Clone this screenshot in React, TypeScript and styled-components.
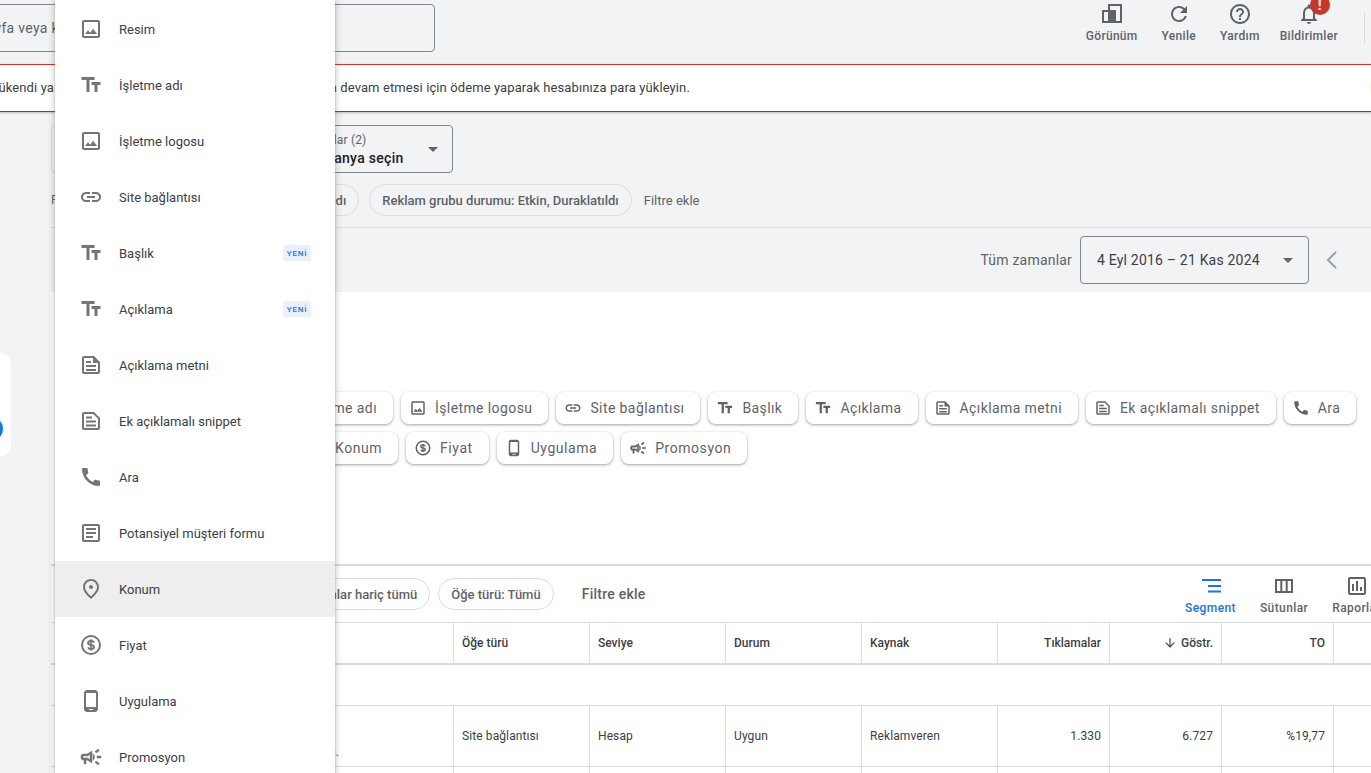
import React from "react";
import styled, { createGlobalStyle } from "styled-components";
import {
  MdOutlineImage, MdTextFields, MdLink, MdCall, MdOutlineArticle,
  MdOutlinePlace, MdOutlinePhoneAndroid, MdOutlineCampaign,
  MdRefresh, MdHelpOutline, MdNotificationsNone, MdOutlineAssessment, MdArrowDownward,
} from "react-icons/md";

const Global = createGlobalStyle`
  html, body { margin: 0; padding: 0; overflow: hidden; background: #f1f3f4; }
  * { box-sizing: border-box; }
`;

const Page = styled.div`
  position: relative;
  width: 1371px;
  height: 773px;
  overflow: hidden;
  background: #f1f3f4;
  font-family: Roboto, "Noto Sans", sans-serif;
  color: #3c4043;
`;

const TopBar = styled.header`
  display: flex;
  align-items: flex-start;
  height: 64px;
  padding: 4px 6px 0 0;
`;

const Search = styled.div`
  width: 465px;
  height: 48px;
  margin-left: -30px;
  padding-left: 7px;
  display: flex;
  align-items: center;
  border: 1px solid #80868b;
  border-radius: 4px;
  font-size: 14px;
  letter-spacing: 0.3px;
  color: #5f6368;
  white-space: nowrap;
`;

const Actions = styled.div`
  margin: -2px 0 0 auto;
  display: flex;
  align-items: flex-start;
`;

const Action = styled.div<{ $gap?: number }>`
  position: relative;
  display: flex;
  flex-direction: column;
  align-items: center;
  margin-left: ${(p) => p.$gap ?? 24}px;
  color: #5f6368;
  font-size: 12px;
  font-weight: 500;
  line-height: 14px;
  letter-spacing: 0.3px;
  svg { display: block; margin-bottom: 3px; }
`;

const VDivider = styled.div`
  width: 1px;
  height: 32px;
  margin: 10px 0 0 26px;
  background: #dadce0;
`;

const Badge = styled.span`
  position: absolute;
  top: -7px;
  left: 30px;
  width: 20px;
  height: 20px;
  border-radius: 50%;
  background: #c53929;
  color: #fff;
  font-size: 14px;
  font-weight: 700;
  line-height: 20px;
  text-align: center;
`;

const Banner = styled.div`
  height: 48px;
  padding-bottom: 2px;
  display: flex;
  align-items: center;
  justify-content: space-between;
  background: #fff;
  border-top: 1px solid #d93025;
  border-bottom: 1px solid #c5221f;
  box-shadow: 0 1px 2px rgba(60, 64, 67, 0.3);
  font-size: 13px;
  letter-spacing: 0.1px;
  white-space: nowrap;
  position: relative;
`;

const BannerText = styled.span`
  margin-left: -105px;
`;

const BannerMark = styled.span`
  width: 1px;
  height: 10px;
  background: #fdf6c8;
`;

const FilterZone = styled.section`
  height: 116px;
  margin-left: 51px;
  padding-top: 13px;
  border-bottom: 1px solid #dadce0;
`;

const PickerRow = styled.div`
  display: flex;
  gap: 8px;
  height: 48px;
`;

const Picker = styled.div<{ $w: number; $muted?: boolean }>`
  position: relative;
  width: ${(p) => p.$w}px;
  height: 48px;
  padding: 6px 0 0 24px;
  border: 1px solid ${(p) => (p.$muted ? "#dadce0" : "#80868b")};
  border-radius: 4px;
  display: flex;
  flex-direction: column;
  justify-content: flex-start;
`;

const PickerLabel = styled.span`
  font-size: 12px;
  line-height: 16px;
  letter-spacing: 0.15px;
  color: #5f6368;
`;

const PickerValue = styled.span`
  font-size: 14px;
  font-weight: 500;
  line-height: 20px;
  letter-spacing: 0.3px;
  color: #202124;
`;

const Caret = styled.span`
  width: 0;
  height: 0;
  border-left: 5.5px solid transparent;
  border-right: 5.5px solid transparent;
  border-top: 5.5px solid #5f6368;
  flex: none;
`;

const PickerCaret = styled(Caret)`
  position: absolute;
  right: 14px;
  top: 21px;
`;

const ChipRow = styled.div`
  display: flex;
  align-items: center;
  gap: 10px;
  margin-top: 11px;
  height: 32px;
  white-space: nowrap;
`;

const FilterLabel = styled.span`
  width: 55px;
  font-size: 12px;
  color: #5f6368;
`;

const FilterChip = styled.span`
  height: 32px;
  padding: 0 12px;
  display: flex;
  align-items: center;
  flex: none;
  border: 1px solid #dadce0;
  border-radius: 16px;
  font-size: 13px;
  font-weight: 500;
  color: #5f6368;
`;

const AddFilter = styled.span`
  margin-left: 2px;
  font-size: 13px;
  color: #5f6368;
`;

const DateRow = styled.div`
  height: 64px;
  display: flex;
  align-items: center;
  justify-content: flex-end;
  padding-right: 27px;
`;

const DateLabel = styled.span`
  font-size: 14px;
  letter-spacing: 0.2px;
  color: #5f6368;
  margin-right: 8px;
`;

const DateSelect = styled.div`
  width: 229px;
  height: 48px;
  padding: 0 15px 0 16px;
  display: flex;
  align-items: center;
  justify-content: space-between;
  border: 1px solid #80868b;
  border-radius: 4px;
  font-size: 14px;
  letter-spacing: 0.2px;
  color: #3c4043;
`;

const Back = styled.span`
  margin-left: 11px;
  display: flex;
  color: #9aa0a6;
`;

const Main = styled.main`
  margin-left: 51px;
  background: #fff;
  overflow: hidden;
  height: 481px;
`;

const TypePanel = styled.div`
  height: 274px;
  padding-top: 100px;
  border-bottom: 2px solid #dadce0;
`;

const TypeRow = styled.div<{ $indent: number; $spacing: number }>`
  display: flex;
  gap: 8px;
  height: 32px;
  margin-bottom: 8px;
  margin-left: ${(p) => p.$indent}px;
  letter-spacing: ${(p) => p.$spacing}px;
  white-space: nowrap;
`;

const TypeChip = styled.div`
  height: 32px;
  padding: 0 16px 0 8px;
  display: flex;
  align-items: center;
  gap: 8px;
  flex: none;
  background: #fff;
  border-radius: 8px;
  box-shadow: 0 1px 2px rgba(60, 64, 67, 0.3), 0 1px 3px 1px rgba(60, 64, 67, 0.15);
  font-size: 14px;
  color: #5f6368;
  svg { flex: none; color: #5f6368; }
`;

const TableBar = styled.div`
  height: 56px;
  display: flex;
  align-items: center;
  white-space: nowrap;
`;

const BarChips = styled.div`
  display: flex;
  gap: 8px;
  margin-left: 218px;
  align-items: center;
`;

const BarAdd = styled.span`
  margin-left: 28px;
  font-size: 14px;
  font-weight: 500;
  letter-spacing: 0.25px;
  color: #5f6368;
`;

const Tools = styled.div`
  margin-left: auto;
  margin-right: -10px;
  display: flex;
  gap: 24px;
`;

const Tool = styled.div<{ $active?: boolean }>`
  display: flex;
  flex-direction: column;
  align-items: center;
  font-size: 12px;
  font-weight: 500;
  line-height: 14px;
  letter-spacing: 0.4px;
  color: ${(p) => (p.$active ? "#1a73e8" : "#5f6368")};
  svg { display: block; margin-bottom: 3px; }
`;

const TableGrid = styled.div`
  display: grid;
  grid-template-columns: 402px repeat(4, 136px) repeat(3, 112px) 1fr;
  width: 1400px;
`;

const HeadCell = styled.div<{ $right?: boolean; $first?: boolean }>`
  height: 43px;
  display: flex;
  align-items: center;
  justify-content: ${(p) => (p.$right ? "flex-end" : "flex-start")};
  padding: 0 8px;
  gap: 4px;
  border-top: 1px solid #dadce0;
  border-bottom: 2px solid #dadce0;
  border-left: ${(p) => (p.$first ? "none" : "1px solid #dadce0")};
  font-size: 12px;
  font-weight: 500;
  color: #3c4043;
`;

const SpacerRow = styled.div`
  grid-column: 1 / -1;
  height: 41px;
  border-bottom: 1px solid #dadce0;
`;

const Cell = styled.div<{ $right?: boolean; $first?: boolean; $h?: number }>`
  height: ${(p) => p.$h ?? 61}px;
  display: flex;
  align-items: center;
  justify-content: ${(p) => (p.$right ? "flex-end" : "flex-start")};
  padding: 0 8px;
  border-bottom: 1px solid #dadce0;
  border-left: ${(p) => (p.$first ? "none" : "1px solid #dadce0")};
  font-size: 12px;
  letter-spacing: 0.1px;
  color: #3c4043;
`;

const LinkCell = styled(Cell)`
  align-items: flex-end;
  justify-content: flex-end;
  padding: 0 114px 7px 0;
  color: #1a56b0;
  white-space: nowrap;
`;

const SideCard = styled.div`
  position: absolute;
  left: -40px;
  top: 352px;
  width: 51px;
  height: 105px;
  border-radius: 12px;
  background: #fff;
  overflow: hidden;
`;

const SideDot = styled.span`
  position: absolute;
  right: 8px;
  top: 64px;
  width: 26px;
  height: 26px;
  border-radius: 50%;
  background: #1a73e8;
`;

const Menu = styled.nav`
  position: absolute;
  left: 55px;
  top: 0;
  width: 280px;
  padding-top: 1px;
  background: #fff;
  box-shadow: 0 2px 6px 2px rgba(60, 64, 67, 0.2), 0 1px 2px rgba(60, 64, 67, 0.3);
`;

const MenuItem = styled.div<{ $active?: boolean }>`
  height: 56px;
  padding: 0 24px;
  display: flex;
  align-items: center;
  gap: 16px;
  background: ${(p) => (p.$active ? "#eeeeee" : "transparent")};
  font-size: 13px;
  color: #3c4043;
  svg { flex: none; color: #757575; }
`;

const NewTag = styled.span`
  margin-left: auto;
  width: 28px;
  height: 16px;
  display: flex;
  align-items: center;
  justify-content: center;
  background: #e8f0fe;
  border-radius: 2px;
  font-size: 8px;
  font-weight: 500;
  letter-spacing: 0.8px;
  color: #1a73e8;
`;

type IconProps = { size?: number };

const PromoIcon = styled(MdOutlineCampaign)`
  path {
    stroke: currentColor;
    stroke-width: 0.5px;
  }
  path[fill="none"] {
    stroke: none;
  }
`;

const ViewIcon = () => (
  <svg width="24" height="24" viewBox="0 0 24 24" fill="#5f6368" fillRule="evenodd">
    <path d="M8 2h14v19H2V8h6V2zM10 4v4h6v11h4V4H10zM4 10v9h4v-9H4z" />
  </svg>
);

const SegmentIcon = () => (
  <svg width="24" height="24" viewBox="0 0 24 24" fill="#1a73e8">
    <path d="M3 5h19v2H3zM9 11h13v2H9zM9 16.5h13v2H9z" />
  </svg>
);

const ColumnsIcon = () => (
  <svg width="24" height="24" viewBox="0 0 24 24" fill="#5f6368" fillRule="evenodd">
    <path d="M3 5h18v14H3V5zM5 7v10h3.3V7H5zM10.3 7v10h3.4V7h-3.4zM15.7 7v10H19V7h-3.3z" />
  </svg>
);

const ChevronBack = () => (
  <svg width="24" height="24" viewBox="0 0 24 24" fill="none" stroke="currentColor" strokeWidth="2">
    <path d="M16 4l-8 8 8 8" />
  </svg>
);

const BodyTextIcon = ({ size = 24 }: IconProps) => (
  <svg width={size} height={size} viewBox="0 0 24 24" fill="currentColor" fillRule="evenodd">
    <path d="M5 3h10l6 6v10a2 2 0 0 1-2 2H5a2 2 0 0 1-2-2V5a2 2 0 0 1 2-2zm0 2v14h14v-9h-5V5H5z" />
    <path d="M7 8h5v2H7zM7 12h10v2H7zM7 16h10v2H7z" />
  </svg>
);

const SnippetIcon = ({ size = 24 }: IconProps) => (
  <svg width={size} height={size} viewBox="0 0 24 24" fill="currentColor" fillRule="evenodd">
    <path d="M5 3h10l6 6v10a2 2 0 0 1-2 2H5a2 2 0 0 1-2-2V5a2 2 0 0 1 2-2zm0 2v14h14V9.8L14.2 5H5z" />
    <path d="M7 7.5h6v2H7zM7 11.5h10v2H7zM7 15.5h10v2H7z" />
  </svg>
);

const PriceIcon = ({ size = 24 }: IconProps) => (
  <svg width={size} height={size} viewBox="0 0 24 24" fill="none" stroke="currentColor" strokeWidth="2">
    <circle cx="12" cy="12" r="9" />
    <path strokeWidth="1.9" d="M15 9.6c-.4-1-1.5-1.6-3-1.6-1.7 0-3 .8-3 2 0 2.8 6 1.3 6 4 0 1.2-1.3 2-3 2-1.5 0-2.6-.6-3-1.6" />
    <path strokeWidth="1.6" d="M12 6.2v11.6" />
  </svg>
);

const items: { label: string; icon: React.ElementType; isNew?: boolean; active?: boolean }[] = [
  { label: "Resim", icon: MdOutlineImage },
  { label: "İşletme adı", icon: MdTextFields },
  { label: "İşletme logosu", icon: MdOutlineImage },
  { label: "Site bağlantısı", icon: MdLink },
  { label: "Başlık", icon: MdTextFields, isNew: true },
  { label: "Açıklama", icon: MdTextFields, isNew: true },
  { label: "Açıklama metni", icon: BodyTextIcon },
  { label: "Ek açıklamalı snippet", icon: SnippetIcon },
  { label: "Ara", icon: MdCall },
  { label: "Potansiyel müşteri formu", icon: MdOutlineArticle },
  { label: "Konum", icon: MdOutlinePlace, active: true },
  { label: "Fiyat", icon: PriceIcon },
  { label: "Uygulama", icon: MdOutlinePhoneAndroid },
  { label: "Promosyon", icon: PromoIcon },
];

const rowOne = items.slice(1, 9);
const rowTwo = items.slice(10, 14);

const columns = [
  { label: "Öğe türü" },
  { label: "Seviye" },
  { label: "Durum" },
  { label: "Kaynak" },
  { label: "Tıklamalar", right: true },
  { label: "Göstr.", right: true, sorted: true },
  { label: "TO", right: true },
  { label: "" },
];

const values = [
  { v: "Site bağlantısı" },
  { v: "Hesap" },
  { v: "Uygun" },
  { v: "Reklamveren" },
  { v: "1.330", right: true },
  { v: "6.727", right: true },
  { v: "%19,77", right: true },
  { v: "" },
];

export default function App() {
  return (
    <Page>
      <Global />
      <TopBar>
        <Search>Sayfa veya kampanya arayın</Search>
        <Actions>
          <Action $gap={0}><ViewIcon />Görünüm</Action>
          <Action><MdRefresh size={24} />Yenile</Action>
          <Action><MdHelpOutline size={24} />Yardım</Action>
          <Action $gap={20}>
            <MdNotificationsNone size={24} />
            Bildirimler
            <Badge>!</Badge>
          </Action>
          <VDivider />
        </Actions>
      </TopBar>
      <Banner>
        <BannerText>
          Hesap bakiyeniz tükendi ya da azalıyor. Reklamlarınızın tekrar yayınlanmaya devam etmesi için ödeme yaparak hesabınıza para yükleyin.
        </BannerText>
        <BannerMark />
      </Banner>
      <FilterZone>
        <PickerRow>
          <Picker $w={192} $muted />
          <Picker $w={202}>
            <PickerLabel>Kampanyalar (2)</PickerLabel>
            <PickerValue>Bir kampanya seçin</PickerValue>
            <PickerCaret />
          </Picker>
        </PickerRow>
        <ChipRow>
          <FilterLabel>Filtreler</FilterLabel>
          <FilterChip>Kampanya durumu: Etkin, Duraklatıldı</FilterChip>
          <FilterChip>Reklam grubu durumu: Etkin, Duraklatıldı</FilterChip>
          <AddFilter>Filtre ekle</AddFilter>
        </ChipRow>
      </FilterZone>
      <DateRow>
        <DateLabel>Tüm zamanlar</DateLabel>
        <DateSelect>
          4 Eyl 2016 – 21 Kas 2024
          <Caret />
        </DateSelect>
        <Back><ChevronBack /></Back>
      </DateRow>
      <Main>
        <TypePanel>
          <TypeRow $indent={219} $spacing={0.4}>
            {rowOne.map((c) => (
              <TypeChip key={c.label}><c.icon size={18} />{c.label}</TypeChip>
            ))}
          </TypeRow>
          <TypeRow $indent={250} $spacing={0.55}>
            {rowTwo.map((c) => (
              <TypeChip key={c.label}><c.icon size={18} />{c.label}</TypeChip>
            ))}
          </TypeRow>
        </TypePanel>
        <TableBar>
          <BarChips>
            <FilterChip>Kaldırılanlar hariç tümü</FilterChip>
            <FilterChip>Öğe türü: Tümü</FilterChip>
          </BarChips>
          <BarAdd>Filtre ekle</BarAdd>
          <Tools>
            <Tool $active><SegmentIcon />Segment</Tool>
            <Tool><ColumnsIcon />Sütunlar</Tool>
            <Tool><MdOutlineAssessment size={24} />Raporlar</Tool>
          </Tools>
        </TableBar>
        <TableGrid>
          <HeadCell $first>Öğe</HeadCell>
          {columns.map((c, i) => (
            <HeadCell key={i} $right={c.right}>
              {c.sorted && <MdArrowDownward size={14} />}
              {c.label}
            </HeadCell>
          ))}
          <SpacerRow />
          <LinkCell $first>Site bağlantısı ayrıntıları.</LinkCell>
          {values.map((c, i) => (
            <Cell key={i} $right={c.right}>{c.v}</Cell>
          ))}
          <Cell $first $h={20} />
          {values.map((c, i) => (
            <Cell key={i} $h={20} />
          ))}
        </TableGrid>
      </Main>
      <SideCard><SideDot /></SideCard>
      <Menu>
        {items.map((m) => (
          <MenuItem key={m.label} $active={m.active}>
            <m.icon size={24} />
            {m.label}
            {m.isNew && <NewTag>YENİ</NewTag>}
          </MenuItem>
        ))}
      </Menu>
    </Page>
  );
}
